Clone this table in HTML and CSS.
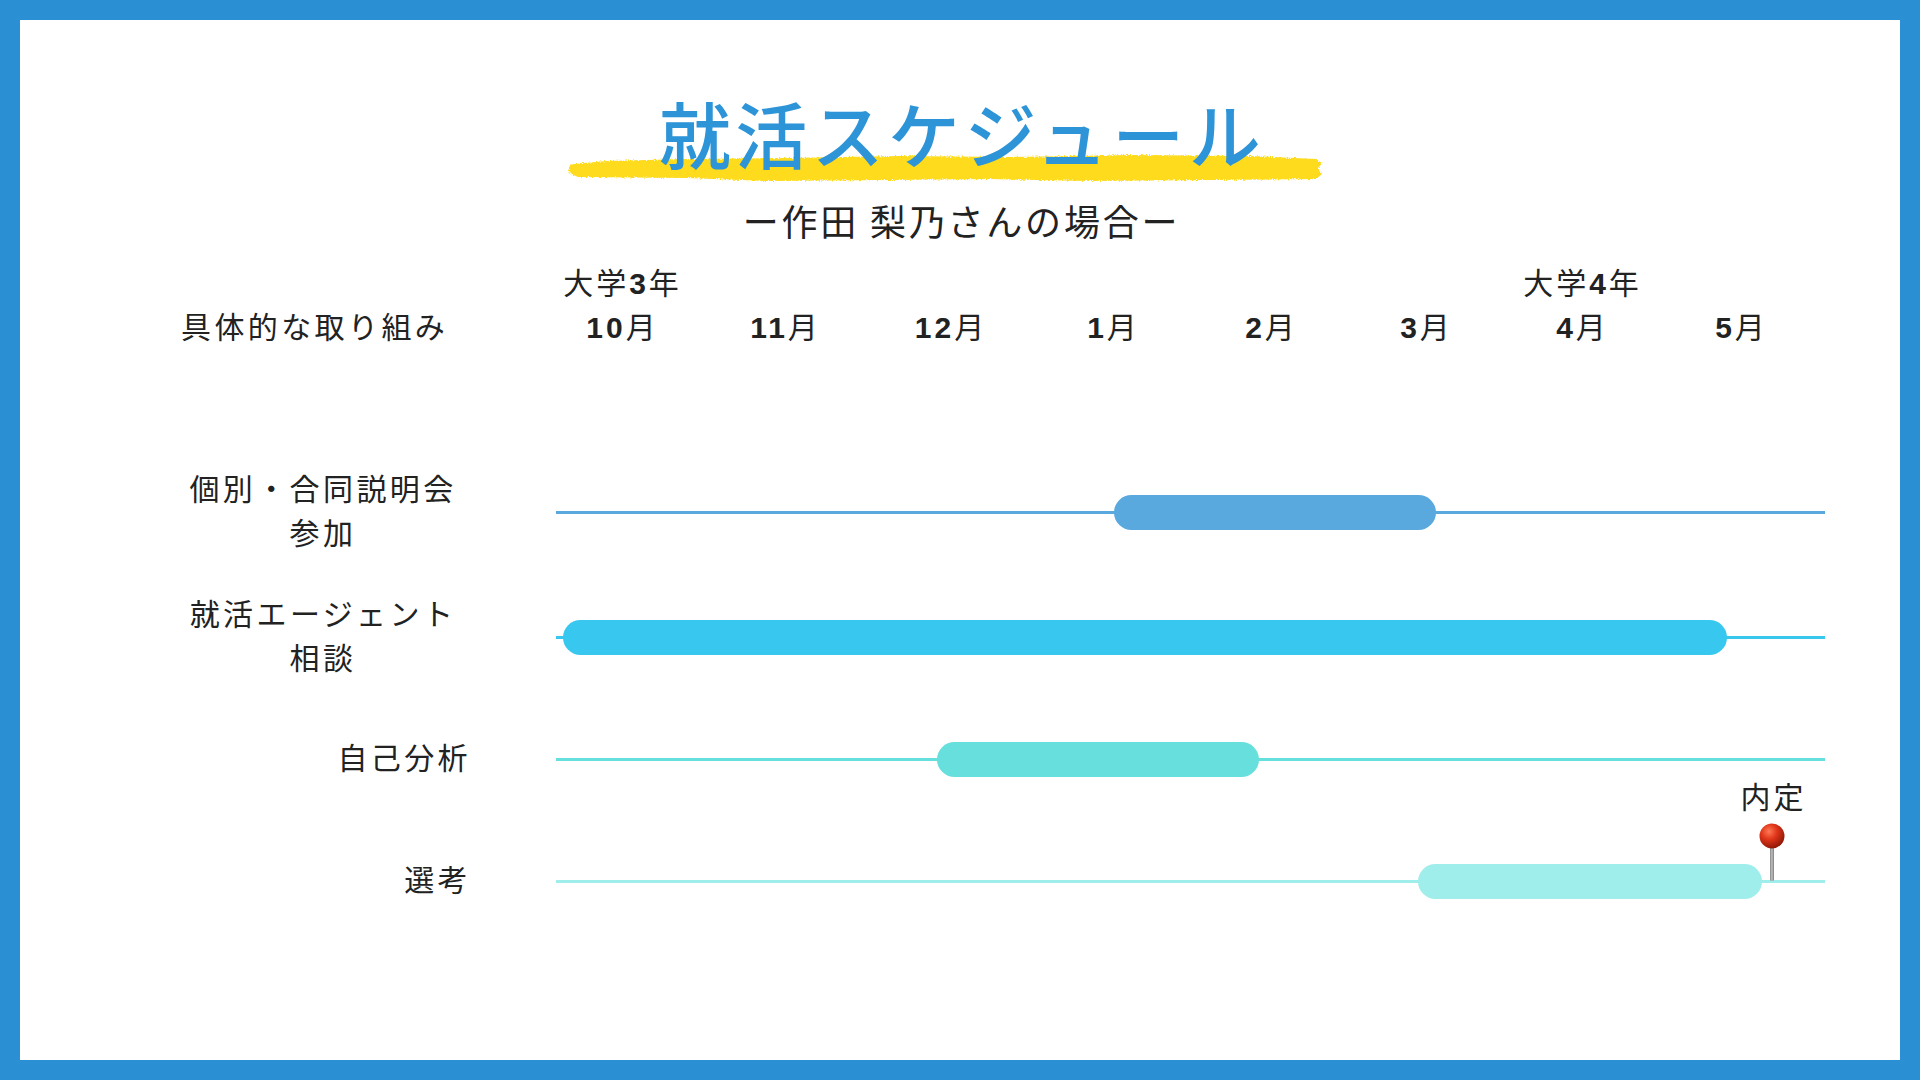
FILE: index.html
```html
<!DOCTYPE html>
<html lang="ja">
<head>
<meta charset="utf-8">
<title>就活スケジュール</title>
<link rel="stylesheet" href="styles.css">
</head>
<body>
<div class="frame">
  <header class="hero">
    <div class="title-wrap">
      <svg class="brush" viewBox="0 0 752 32" width="758" height="32" preserveAspectRatio="none" aria-hidden="true">
        <defs>
          <filter id="rough" x="-2%" y="-30%" width="104%" height="160%">
            <feTurbulence type="fractalNoise" baseFrequency="0.9 0.6" numOctaves="2" seed="3" result="n"/>
            <feDisplacementMap in="SourceGraphic" in2="n" scale="4" xChannelSelector="R" yChannelSelector="G"/>
          </filter>
        </defs>
        <path filter="url(#rough)" fill="#fedb1c" d="M8,12 C2,13 1,19 5,22 L12,25 L120,26 L200,29 L320,28 L420,27 L520,29 L640,28 L744,27 L750,22 L746,17 L750,11 L744,7 L680,4 L560,3 L440,5 L330,4 L220,6 L120,7 L40,9 Z"/>
      </svg>
      <h1 class="title">就活スケジュール</h1>
    </div>
    <p class="subtitle">ー作田 梨乃さんの場合ー</p>
  </header>

  <section class="chart">
    <div class="head">
      <div class="year year-3">大学<b>3</b>年</div>
      <div class="year year-4">大学<b>4</b>年</div>
      <div class="head-label">具体的な取り組み</div>
      <div class="month m1"><b>10</b>月</div>
      <div class="month m2"><b>11</b>月</div>
      <div class="month m3"><b>12</b>月</div>
      <div class="month m4"><b>1</b>月</div>
      <div class="month m5"><b>2</b>月</div>
      <div class="month m6"><b>3</b>月</div>
      <div class="month m7"><b>4</b>月</div>
      <div class="month m8"><b>5</b>月</div>
    </div>

    <div class="row row-seminar">
      <div class="label label-center">個別・合同説明会<br>参加</div>
      <div class="track"><div class="bar" style="margin-left:558px;width:322px"></div></div>
    </div>

    <div class="row row-agent">
      <div class="label label-center">就活エージェント<br>相談</div>
      <div class="track"><div class="bar" style="margin-left:7px;width:1164px"></div></div>
    </div>

    <div class="row row-self">
      <div class="label label-right">自己分析</div>
      <div class="track"><div class="bar" style="margin-left:381px;width:322px"></div></div>
    </div>

    <div class="row row-select">
      <div class="label label-right">選考</div>
      <div class="track">
        <div class="bar" style="margin-left:862px;width:344px"></div>
        <div class="pin">
          <span class="pin-text">内定</span>
          <svg class="pin-icon" viewBox="0 0 30 58" width="30" height="58" aria-hidden="true">
            <defs>
              <radialGradient id="ball" cx="0.38" cy="0.32" r="0.7">
                <stop offset="0" stop-color="#ff7a55"/>
                <stop offset="0.45" stop-color="#e0361a"/>
                <stop offset="1" stop-color="#8e1706"/>
              </radialGradient>
              <linearGradient id="needle" x1="0" y1="0" x2="1" y2="0">
                <stop offset="0" stop-color="#5a5a5a"/>
                <stop offset="0.5" stop-color="#d8d8d8"/>
                <stop offset="1" stop-color="#4a4a4a"/>
              </linearGradient>
            </defs>
            <rect x="13.3" y="20" width="3.4" height="38" rx="1.5" fill="url(#needle)"/>
            <circle cx="15" cy="13" r="12.5" fill="url(#ball)"/>
          </svg>
        </div>
      </div>
    </div>
  </section>
</div>
</body>
</html>
```

FILE: styles.css
```css
html, body {
  margin: 0;
  padding: 0;
  background: #ffffff;
}

body {
  font-family: "Liberation Sans", "Noto Sans CJK JP", sans-serif;
  color: #222222;
}

.frame {
  box-sizing: border-box;
  width: 1920px;
  height: 1080px;
  border: 20px solid #2b8fd4;
  background: #ffffff;
  overflow: hidden;
}

/* ---------- hero ---------- */
.hero {
  display: flex;
  flex-direction: column;
  align-items: center;
  padding-top: 72px;
}

.title-wrap {
  position: relative;
}

.brush {
  position: absolute;
  left: -89px;
  top: 60px;
  z-index: 0;
}

.title {
  position: relative;
  z-index: 1;
  margin: 0;
  padding-left: 4px;
  font-family: "Noto Sans CJK JP", sans-serif;
  font-weight: 500;
  font-size: 72px;
  line-height: 80px;
  letter-spacing: 4.4px;
  color: #2e94d8;
}

.subtitle {
  margin: 26px 0 0;
  padding-left: 3px;
  font-family: "Noto Sans CJK JP", sans-serif;
  font-size: 36px;
  line-height: 44px;
  letter-spacing: 2.8px;
  color: #222222;
}

/* ---------- chart ---------- */
.chart {
  padding-left: 161px;
  margin-top: 20px;
}

.head {
  display: grid;
  grid-template-columns: 360px 160px 166px 165px 160px 156px 154px 158px 160px;
  grid-template-rows: 44px 44px;
  font-size: 30px;
  line-height: 44px;
  letter-spacing: 3px;
}

.head b {
  font-family: "Liberation Sans", sans-serif;
  font-weight: 700;
}

.year {
  grid-row: 1;
  text-align: center;
  padding-left: 3px;
}

.year-3 { grid-column: 2; }
.year-4 { grid-column: 8; }

.head-label {
  grid-row: 2;
  grid-column: 1;
  letter-spacing: 3.4px;
}

.month {
  grid-row: 2;
  text-align: center;
  padding-left: 3px;
}

.row {
  display: grid;
  grid-template-columns: 290px 1269px;
  column-gap: 85px;
  align-items: center;
  height: 122px;
}

.row-seminar { margin-top: 101px; color: #5aa9de; }
.row-agent { margin-top: 3px; color: #38c8ef; }
.row-self { color: #67e0dd; }
.row-select { color: #a0eeec; }

.label {
  font-size: 30px;
  line-height: 44px;
  letter-spacing: 3.4px;
  color: #222222;
}

.label-center {
  text-align: center;
  padding-right: 6px;
}

.label-right {
  text-align: right;
}

.track {
  position: relative;
  display: flex;
  align-items: center;
  height: 35px;
}

.track::before {
  content: "";
  position: absolute;
  left: 0;
  right: 0;
  top: 16px;
  height: 3px;
  background: currentColor;
}

.bar {
  position: relative;
  height: 35px;
  border-radius: 18px;
  background: currentColor;
}

/* ---------- pin ---------- */
.pin {
  position: absolute;
  left: 1176px;
  bottom: 18px;
  width: 80px;
  display: flex;
  flex-direction: column;
  align-items: center;
}

.pin-text {
  font-size: 30px;
  line-height: 30px;
  letter-spacing: 3px;
  padding-left: 3px;
  white-space: nowrap;
  color: #222222;
  margin-bottom: 10px;
}

.pin-icon {
  display: block;
}
```
